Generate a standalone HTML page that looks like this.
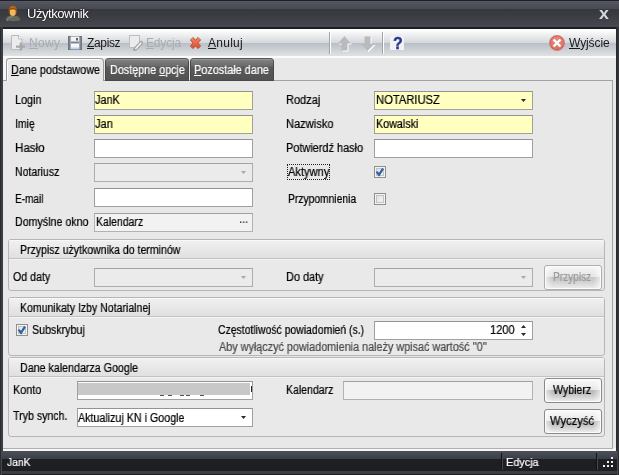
<!DOCTYPE html>
<html lang="pl"><head><meta charset="utf-8"><title>Użytkownik</title>
<style>
*{box-sizing:border-box;margin:0;padding:0}
html,body{width:619px;height:475px;overflow:hidden;background:#2b2d32}
body{position:relative;font-family:"Liberation Sans",sans-serif;font-size:12px;color:#000;line-height:14px}
.a{position:absolute;white-space:nowrap}
.s{transform-origin:0 0;line-height:14px;will-change:transform;-webkit-text-stroke:.22px currentColor}
#title{left:0;top:0;width:619px;height:29px;background:linear-gradient(#1e2026 0,#1e2026 1px,#5c5f68 1px,#52555e 2px,#484b54 9px,#37383d 9px,#3a3b41 14px,#46494f 27.200px,#1c1e22 27.200px,#1c1e22 29px)}
#title .t{will-change:transform;left:27px;top:6px;font-size:13px;line-height:16px;color:#fff;text-shadow:0 0 2px #000;letter-spacing:-.45px}
#frame{left:0;top:27px;width:619px;height:426px;background:linear-gradient(90deg,#2a2c30 0,#2a2c30 1px,#3a3d43 1px,#3a3d43 3px,transparent 3px,transparent 616px,#2a2c30 616px,#2a2c30 618px,#383a40 618px)}
#tb{left:3px;top:29px;width:613px;height:29px;background:linear-gradient(#1c1e22 0,#1c1e22 .4px,#fdfdfd .5px,#fbfbfb 2px,#d4d7db 14px,#b9bec8 14px,#bcc1ca 15px,#dde1e1 26.500px,#fbfbfb 27px,#fbfbfb 28.500px,#ebebeb 29px)}
.tbt{will-change:transform;font-size:12px;line-height:15px;top:36px;color:#1a1a1a}
.dis{color:#a9acb0}
u{text-decoration:underline;text-underline-offset:1px;text-decoration-thickness:1px}
#panel{left:3px;top:58px;width:613px;height:393px;background:linear-gradient(#e9e8e8 0,#e9e8e8 390px,#f6f6f6 390px)}
#pb{left:3px;top:80px;width:610px;height:369px;border-top:1px solid #a3a3a3;border-right:1px solid #a3a3a3;border-bottom:1px solid #b0b0b0;background:#e9e8e8}
.tab{top:58px;height:22px;border:1px solid #8f8f8f;border-bottom:none;border-radius:4px 4px 0 0}
.tab.on{background:#e9e8e8;border-color:#9a9a9a;height:23px;box-shadow:inset 1px 1px 0 #fbfbfb}
.tab.off{height:23px;background:linear-gradient(#868686 0,#7c7c7c 2px,#6b6b6b 7px,#5a5a5a 8px,#525252 100%);border:1px solid #484848;border-top-color:#555;box-shadow:inset 0 1px 0 #989898}
.in{border:1px solid #a0a0a0;border-top-color:#939393;background:#fff}
.y{background:#ffffc0}
.g{background:#f2f2f2;border-color:#b2b2b2;border-top-color:#a0a0a0}
.d{background:#ebebeb;border-color:#adadad;border-top-color:#a2a2a2}
.gb{border:1px solid #b6b6b6;border-radius:3px;background:#e9e9e9}
.gh{left:0;top:0;right:0;height:19px;border-bottom:1px solid #c2c2c2;background:linear-gradient(#f1f1f1,#e0e0e0);border-radius:2px 2px 0 0;box-shadow:0 1px 0 #f4f4f4,inset 0 1px 0 #f8f8f8}
.btn{width:58px;height:25px;border:1px solid #8a8a8a;border-radius:3px;background:linear-gradient(90deg,rgba(255,255,255,.65) 0,rgba(255,255,255,0) 14%,rgba(255,255,255,0) 86%,rgba(255,255,255,.65) 100%),linear-gradient(#fafafa 0,#e6e6e6 46%,#b8b8b8 50%,#c2c2c2 65%,#f0f0f0 100%);box-shadow:inset 0 0 0 1px #fcfcfc}
.bd{border-color:#adadad;background:linear-gradient(90deg,rgba(255,255,255,.65) 0,rgba(255,255,255,0) 14%,rgba(255,255,255,0) 86%,rgba(255,255,255,.65) 100%),linear-gradient(#f7f7f7 0,#e4e4e4 46%,#c6c6c6 50%,#cecece 65%,#eeeeee 100%)}
.cb{width:12px;height:12px;border:1px solid #8e8f8f;background:linear-gradient(135deg,#d8dade,#fafafa);box-shadow:inset 0 0 0 1px #f4f4f4,inset 0 0 0 2px #c0c4c8}
#sb{left:0;top:451px;width:619px;height:24px;background:linear-gradient(90deg,#2a2c30 0,#2a2c30 1px,#44474e 1px,#44474e 2px,transparent 2px,transparent 617px,#44474e 617px,#44474e 618px,#2a2c30 618px),linear-gradient(#4c505a 0,#3b3e46 8px,#1e1f23 8px,#1e1f23 20px,#3a3d44 20px,#3a3d44 23px,#1c1d20 23px)}
</style></head><body>
<div id="title" class="a">
 <svg class="a" style="left:5px;top:5px" width="17" height="18" viewBox="5 5 17 18"><path d="M5.800 20c0-3 3-4.400 7.200-4.400s7.200 1.400 7.200 4.400c0 1.600-14.400 1.600-14.400 0z" fill="#66675a"/><path d="M7 21c.5-2.500 2.500-4.200 6-4.200" stroke="#8a8b7c" stroke-width="1" fill="none"/><ellipse cx="12.800" cy="10.800" rx="4.400" ry="5.300" fill="#8f4a10"/><path d="M10 10c1.800-.6 3.800-.6 5.600 0v3.200c0 1.800-1.300 2.800-2.800 2.800s-2.800-1-2.800-2.800z" fill="#eebc5c"/><path d="M9.200 9.200c1-1.500 6-1.500 7.200 0-.3-2.200-1.800-3.400-3.600-3.400s-3.300 1.200-3.600 3.400z" fill="#b8681a"/></svg>
 <div class="a t">Użytkownik</div>
 <div class="a" style="left:599.300px;top:4.900px;font-size:16px;line-height:18px;font-weight:bold;color:#d6d8dc;transform:scaleX(1.11);transform-origin:0 0;will-change:transform">x</div>
</div>
<div id="frame" class="a"></div>
<div id="tb" class="a"></div>
<svg class="a" style="left:3px;top:29px" width="613" height="28" viewBox="3 29 613 28">
 <defs>
  <linearGradient id="gx" x1="0" y1="0" x2="0" y2="1"><stop offset="0" stop-color="#f4825a"/><stop offset="1" stop-color="#d9553a"/></linearGradient>
  <linearGradient id="gfl" x1="0" y1="0" x2="0" y2="1"><stop offset="0" stop-color="#fff"/><stop offset=".5" stop-color="#f2f6fb"/><stop offset="1" stop-color="#9fc0e6"/></linearGradient>
  <radialGradient id="gc" cx="0.5" cy="0.35" r="0.7"><stop offset="0" stop-color="#ec9084"/><stop offset="1" stop-color="#d6665a"/></radialGradient>
 </defs>
 <!-- new -->
 <path d="M11.500 35.500h7l3.500 3.500v10.500h-10.500z" fill="#ececec" stroke="#b9bbbd"/>
 <path d="M18.500 35.500v3.500h3.500" fill="#fff" stroke="#b9bbbd"/>
 <path d="M20.800 42.500v8M16 46.700h9" stroke="#a6a8aa" stroke-width="2.300" fill="none"/>
 <!-- save -->
 <rect x="68" y="36" width="14" height="14" fill="#80858f"/>
 <rect x="68.500" y="36.500" width="13" height="13" fill="none" stroke="#70757f"/>
 <rect x="70" y="36.500" width="1" height="13" fill="#a4a9b2"/>
 <rect x="79" y="36.500" width="1" height="13" fill="#a4a9b2"/>
 <rect x="71" y="36.500" width="8" height="5" fill="#f4f4f6"/>
 <rect x="76" y="38" width="2" height="2.500" fill="#5a606c"/>
 <rect x="71" y="43.500" width="8" height="6" fill="url(#gfl)"/>
 <!-- edit -->
 <rect x="129.500" y="35.500" width="10" height="12" fill="#ececec" stroke="#bcbec0"/>
 <path d="M141.200 42.800L135.600 48.600" stroke="#a0a2a4" stroke-width="3.800" stroke-linecap="round" fill="none"/>
 <path d="M133 51l.8-3 2.200 2.200z" fill="#a0a2a4"/>
 <path d="M141 43L135.800 48.400" stroke="#f6f6f6" stroke-width="1.500" stroke-linecap="round" fill="none"/>
 <!-- cancel -->
 <path d="M191.500 38.500l8 9M199.500 38.500l-8 9" stroke="#b5472c" stroke-width="4.200" fill="none"/>
 <path d="M191.500 38.500l8 9M199.500 38.500l-8 9" stroke="url(#gx)" stroke-width="3" fill="none"/>
 <!-- separators -->
 <rect x="329" y="32" width="1" height="22" fill="#a0a3a6"/><rect x="330" y="32" width="1" height="22" fill="#fff"/>
 <rect x="382" y="32" width="1" height="22" fill="#a0a3a6"/><rect x="383" y="32" width="1" height="22" fill="#fff"/>
 <!-- arrows -->
 <path d="M344.500 36L351 43.500H347.500V50.500H341.500V43.500H338Z" fill="#fff" transform="translate(1 1)"/>
 <path d="M344.500 36L351 43.500H347.500V50.500H341.500V43.500H338Z" fill="#b9babc"/>
 <path d="M364.500 36.500H370.500V44H374.500L367.500 51L360.500 44H364.500Z" fill="#fff" transform="translate(1 1)"/>
 <path d="M364.500 36.500H370.500V44H374.500L367.500 51L360.500 44H364.500Z" fill="#b9babc"/>
 <!-- help -->
 <rect x="390" y="36" width="14" height="14" fill="#f1f2f3"/>
 <!-- exit -->
 <circle cx="557" cy="43" r="8" fill="#dfa49c"/>
 <circle cx="557" cy="43" r="7.200" fill="url(#gc)" stroke="#c4625a" stroke-width=".8"/>
 <path d="M553.500 39.500l7 7M560.500 39.500l-7 7" stroke="#fff" stroke-width="2.400" fill="none"/>
</svg>
<div class="a tbt dis" style="left:29px;letter-spacing:.3px"><u>N</u>owy</div>
<div class="a tbt" style="left:87px;letter-spacing:-.35px"><u>Z</u>apisz</div>
<div class="a tbt dis" style="left:146px;letter-spacing:-.17px"><u>E</u>dycja</div>
<div class="a tbt" style="left:208px;letter-spacing:.27px"><u>A</u>nuluj</div>
<div class="a tbt" style="left:569px;letter-spacing:-.1px"><u>W</u>yjście</div>
<div class="a tbt" style="left:392.500px;top:33.500px;font-weight:bold;font-size:16px;line-height:19px;color:#27348b;-webkit-text-stroke:.4px #27348b">?</div>
<div id="panel" class="a"></div>
<div id="pb" class="a"></div>

<div class="a tab off" style="left:105px;width:84px"></div>
<div class="a tab off" style="left:190px;width:84px"></div>
<div class="a" style="left:3px;top:58px;width:3px;height:22px;background:#f6f6f6"></div><div class="a" style="left:3px;top:80px;width:4px;height:1px;background:#a3a3a3"></div>
<div class="a tab on" style="left:6px;width:98px"></div>
<div class="a in y" style="left:94px;top:91px;width:159px;height:19px"></div>
<div class="a in y" style="left:94px;top:115px;width:159px;height:19px"></div>
<div class="a in " style="left:94px;top:139px;width:159px;height:19px"></div>
<div class="a in d" style="left:94px;top:163px;width:159px;height:19px"></div>
<svg class="a" style="left:241px;top:171px" width="5" height="3" viewBox="0 0 5 3"><path d="M0 0h5l-2.500 3z" fill="#a9a9a9"/></svg>
<div class="a in " style="left:94px;top:188px;width:159px;height:19px"></div>
<div class="a in g" style="left:94px;top:213px;width:159px;height:19px"></div>
<div class="a in y" style="left:374px;top:91px;width:159px;height:19px"></div>
<svg class="a" style="left:521px;top:99px" width="5" height="3" viewBox="0 0 5 3"><path d="M0 0h5l-2.500 3z" fill="#2a2a2a"/></svg>
<div class="a in y" style="left:374px;top:115px;width:159px;height:19px"></div>
<div class="a in " style="left:374px;top:139px;width:159px;height:19px"></div>
<div class="a cb" style="left:374px;top:166px"><svg class="a" style="left:0;top:0" width="10" height="10" viewBox="0 0 10 10"><path d="M1.600 4.600l2.400 3.200 4-6.200" stroke="#2f5f9e" stroke-width="2.200" fill="none"/></svg></div>
<div class="a cb" style="left:374px;top:193px"></div>
<div class="a" style="left:287px;top:164px;width:43px;height:16px;border:1px dotted #222"></div>
<div class="a gb" style="left:8px;top:239px;width:597px;height:52px"><div class="a gh"></div></div>
<div class="a in d" style="left:94px;top:268px;width:159px;height:19px"></div>
<svg class="a" style="left:241px;top:276px" width="5" height="3" viewBox="0 0 5 3"><path d="M0 0h5l-2.500 3z" fill="#a9a9a9"/></svg>
<div class="a in d" style="left:374px;top:268px;width:159px;height:19px"></div>
<svg class="a" style="left:521px;top:276px" width="5" height="3" viewBox="0 0 5 3"><path d="M0 0h5l-2.500 3z" fill="#a9a9a9"/></svg>
<div class="a btn bd" style="left:544px;top:265px"></div>
<div class="a gb" style="left:8px;top:297px;width:597px;height:59px"><div class="a gh"></div></div>
<div class="a cb" style="left:16px;top:324px"><svg class="a" style="left:0;top:0" width="10" height="10" viewBox="0 0 10 10"><path d="M1.600 4.600l2.400 3.200 4-6.200" stroke="#2f5f9e" stroke-width="2.200" fill="none"/></svg></div>
<div class="a in " style="left:374px;top:321px;width:159px;height:19px"></div>
<svg class="a" style="left:521px;top:325px" width="5" height="11" viewBox="0 0 5 11"><path d="M0 3h5L2.500 0zM0 8h5L2.500 11z" fill="#2a2a2a"/></svg>
<div class="a gb" style="left:8px;top:357px;width:597px;height:80px"><div class="a gh"></div></div>
<div class="a in " style="left:77px;top:381px;width:176px;height:19px"></div>
<div class="a" style="left:78px;top:383px;width:172px;height:12px;background:#c8c8c8"></div>
<div class="a" style="left:251px;top:386px;width:1px;height:6px;background:#222"></div>
<div class="a" style="left:160px;top:395px;width:4px;height:1px;background:#555;box-shadow:8px 0 0 #555,20px 0 0 #555,26px 0 0 #555,40px 0 0 #555"></div>
<div class="a in g" style="left:343px;top:381px;width:190px;height:19px"></div>
<div class="a btn " style="left:544px;top:378px"></div>
<div class="a in " style="left:77px;top:408px;width:176px;height:19px"></div>
<svg class="a" style="left:241px;top:416px" width="5" height="3" viewBox="0 0 5 3"><path d="M0 0h5l-2.500 3z" fill="#2a2a2a"/></svg>
<div class="a btn " style="left:544px;top:409px"></div>
<div id="sb" class="a">
 <div class="a" style="left:501px;top:2px;width:2px;height:17px;background:linear-gradient(90deg,#121316 50%,#44474e 50%)"></div>
 <div class="a" style="left:596px;top:2px;width:2px;height:17px;background:linear-gradient(90deg,#121316 50%,#44474e 50%)"></div>
 <svg class="a" style="left:602px;top:5px" width="12" height="12" viewBox="0 0 12 12"><g fill="#f0f0f0"><rect x="9" y="1" width="2" height="2"/><rect x="5" y="5" width="2" height="2"/><rect x="9" y="5" width="2" height="2"/><rect x="1" y="9" width="2" height="2"/><rect x="5" y="9" width="2" height="2"/><rect x="9" y="9" width="2" height="2"/></g></svg>
</div>

<div id="t0" class="a s" style="left:11.10px;top:63.03px;font-size:12px;transform:scaleX(0.9013);"><u>D</u>ane podstawowe</div>
<div id="t1" class="a s" style="left:109.80px;top:63.03px;font-size:12px;transform:scaleX(0.8980);color:#fff">Dostępne <u>o</u>pcje</div>
<div id="t2" class="a s" style="left:194.40px;top:63.03px;font-size:12px;transform:scaleX(0.9051);color:#fff"><u>P</u>ozostałe dane</div>
<div id="t3" class="a s" style="left:14.60px;top:93.03px;font-size:12px;transform:scaleX(0.9021);">Login</div>
<div id="t4" class="a s" style="left:14.60px;top:117.03px;font-size:12px;transform:scaleX(0.8733);">Imię</div>
<div id="t5" class="a s" style="left:14.60px;top:141.03px;font-size:12px;transform:scaleX(0.9646);">Hasło</div>
<div id="t6" class="a s" style="left:14.60px;top:165.03px;font-size:12px;transform:scaleX(0.8740);">Notariusz</div>
<div id="t7" class="a s" style="left:14.60px;top:192.03px;font-size:12px;transform:scaleX(0.8349);">E-mail</div>
<div id="t8" class="a s" style="left:14.60px;top:215.03px;font-size:12px;transform:scaleX(0.8886);">Domyślne okno</div>
<div id="t9" class="a s" style="left:95.00px;top:93.03px;font-size:12px;transform:scaleX(0.9065);">JanK</div>
<div id="t10" class="a s" style="left:95.00px;top:117.03px;font-size:12px;transform:scaleX(0.9195);">Jan</div>
<div id="t11" class="a s" style="left:95.80px;top:215.03px;font-size:12px;transform:scaleX(0.8733);">Kalendarz</div>
<div id="t12" class="a s" style="left:239.20px;top:212.03px;font-size:12px;transform:scaleX(0.9186);color:#333">...</div>
<div id="t13" class="a s" style="left:285.90px;top:93.03px;font-size:12px;transform:scaleX(0.9181);">Rodzaj</div>
<div id="t14" class="a s" style="left:285.90px;top:117.03px;font-size:12px;transform:scaleX(0.9249);">Nazwisko</div>
<div id="t15" class="a s" style="left:285.90px;top:141.03px;font-size:12px;transform:scaleX(0.9101);">Potwierdź hasło</div>
<div id="t16" class="a s" style="left:288.10px;top:165.03px;font-size:12px;transform:scaleX(0.9242);">Aktywny</div>
<div id="t17" class="a s" style="left:287.80px;top:192.03px;font-size:12px;transform:scaleX(0.8580);">Przypomnienia</div>
<div id="t18" class="a s" style="left:375.70px;top:93.03px;font-size:12px;transform:scaleX(0.9335);">NOTARIUSZ</div>
<div id="t19" class="a s" style="left:375.70px;top:117.03px;font-size:12px;transform:scaleX(0.8932);">Kowalski</div>
<div id="t20" class="a s" style="left:19.50px;top:243.03px;font-size:12px;transform:scaleX(0.8772);">Przypisz użytkownika do terminów</div>
<div id="t21" class="a s" style="left:12.60px;top:269.53px;font-size:12px;transform:scaleX(0.8874);">Od daty</div>
<div id="t22" class="a s" style="left:286.40px;top:269.53px;font-size:12px;transform:scaleX(0.9091);">Do daty</div>
<div id="t23" class="a s" style="left:552.50px;top:270.03px;font-size:12px;transform:scaleX(0.8402);color:#9b9b9b">Przypisz</div>
<div id="t24" class="a s" style="left:19.70px;top:301.03px;font-size:12px;transform:scaleX(0.8774);">Komunikaty Izby Notarialnej</div>
<div id="t25" class="a s" style="left:31.80px;top:323.03px;font-size:12px;transform:scaleX(0.8893);">Subskrybuj</div>
<div id="t26" class="a s" style="left:218.10px;top:323.03px;font-size:12px;transform:scaleX(0.8693);">Częstotliwość powiadomień (s.)</div>
<div id="t27" class="a s" style="left:489.80px;top:323.03px;font-size:12px;transform:scaleX(0.9250);">1200</div>
<div id="t28" class="a s" style="left:218.60px;top:340.03px;font-size:12px;transform:scaleX(0.9011);color:#4a4a4a">Aby wyłączyć powiadomienia należy wpisać wartość ''0''</div>
<div id="t29" class="a s" style="left:19.60px;top:361.03px;font-size:12px;transform:scaleX(0.8895);">Dane kalendarza Google</div>
<div id="t30" class="a s" style="left:12.70px;top:383.03px;font-size:12px;transform:scaleX(0.9024);">Konto</div>
<div id="t31" class="a s" style="left:286.40px;top:383.03px;font-size:12px;transform:scaleX(0.8770);">Kalendarz</div>
<div id="t32" class="a s" style="left:552.50px;top:383.03px;font-size:12px;transform:scaleX(0.8812);">Wybierz</div>
<div id="t33" class="a s" style="left:12.70px;top:409.03px;font-size:12px;transform:scaleX(0.8834);">Tryb synch.</div>
<div id="t34" class="a s" style="left:77.60px;top:410.53px;font-size:12px;transform:scaleX(0.8912);">Aktualizuj KN i Google</div>
<div id="t35" class="a s" style="left:550.00px;top:414.03px;font-size:12px;transform:scaleX(0.9315);">Wyczyść</div>
<div id="t36" class="a s" style="left:7.00px;top:455.20px;font-size:11.5px;transform:scaleX(0.8963);color:#fff">JanK</div>
<div id="t37" class="a s" style="left:505.50px;top:455.20px;font-size:11.5px;transform:scaleX(0.9470);color:#fff">Edycja</div>
</body></html>
